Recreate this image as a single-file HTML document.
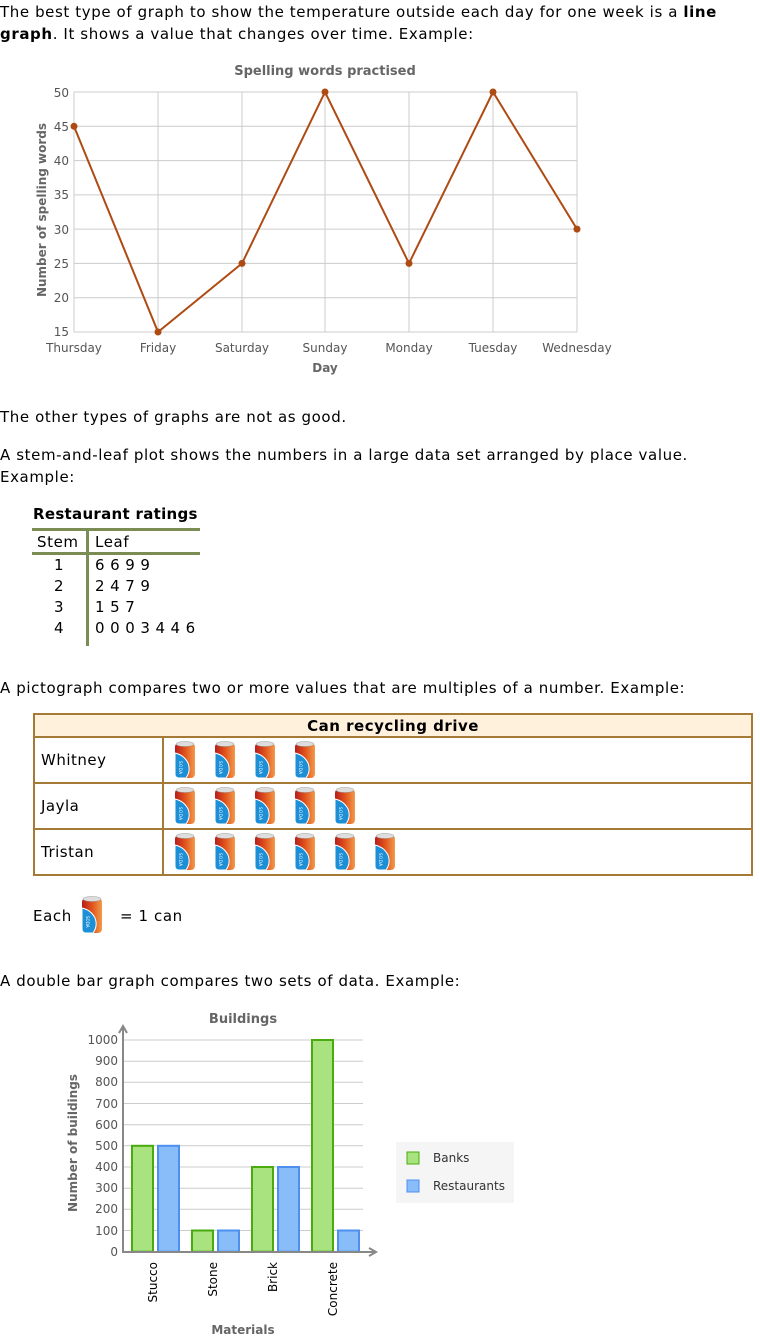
<!DOCTYPE html>
<html><head><meta charset="utf-8"><style>
body{margin:0;width:760px;height:1338px;background:#fff;font-family:"DejaVu Sans","Liberation Sans",sans-serif;color:#000;position:relative;overflow:hidden}
.t{position:absolute;font-size:15px;line-height:22px;white-space:nowrap;letter-spacing:0.6px}
svg text{font-family:"DejaVu Sans","Liberation Sans",sans-serif}
table.pic{position:absolute;left:33px;top:713px;width:720px;border-collapse:collapse}
table.pic td{border:2px solid #a57a36;font-size:15px;padding:0 0 0 6px;height:44px;letter-spacing:0.5px}
</style></head><body>
<div class="t" style="left:0;top:1px">The best type of graph to show the temperature outside each day for one week is a <b>line</b></div>
<div class="t" style="left:0;top:23px"><b>graph</b>. It shows a value that changes over time. Example:</div>

<svg style="position:absolute;left:0;top:0" width="760" height="400">
<text x="325" y="75" font-size="13" font-weight="bold" fill="#666" text-anchor="middle">Spelling words practised</text>
<g stroke="#ccc" stroke-width="1">
<line x1="74" y1="92" x2="577" y2="92"/><line x1="74" y1="126.3" x2="577" y2="126.3"/><line x1="74" y1="160.6" x2="577" y2="160.6"/><line x1="74" y1="194.9" x2="577" y2="194.9"/><line x1="74" y1="229.1" x2="577" y2="229.1"/><line x1="74" y1="263.4" x2="577" y2="263.4"/><line x1="74" y1="297.7" x2="577" y2="297.7"/><line x1="74" y1="332" x2="577" y2="332"/>
<line x1="74" y1="92" x2="74" y2="332"/><line x1="158" y1="92" x2="158" y2="332"/><line x1="242" y1="92" x2="242" y2="332"/><line x1="325" y1="92" x2="325" y2="332"/><line x1="409" y1="92" x2="409" y2="332"/><line x1="493" y1="92" x2="493" y2="332"/><line x1="577" y1="92" x2="577" y2="332"/>
</g>
<g font-size="12" fill="#555" text-anchor="end">
<text x="69" y="97">50</text><text x="69" y="131">45</text><text x="69" y="165">40</text><text x="69" y="199">35</text><text x="69" y="234">30</text><text x="69" y="268">25</text><text x="69" y="302">20</text><text x="69" y="336">15</text></g>
<g font-size="12" fill="#555" text-anchor="middle">
<text x="74" y="352">Thursday</text><text x="158" y="352">Friday</text><text x="242" y="352">Saturday</text><text x="325" y="352">Sunday</text><text x="409" y="352">Monday</text><text x="493" y="352">Tuesday</text><text x="577" y="352">Wednesday</text></g>
<text x="325" y="372" font-size="12" font-weight="bold" fill="#666" text-anchor="middle">Day</text>
<text transform="translate(46,210) rotate(-90)" font-size="12" font-weight="bold" fill="#666" text-anchor="middle">Number of spelling words</text>
<polyline fill="none" stroke="#ae4a13" stroke-width="2" points="74,126.3 158,332 242,263.4 325,92 409,263.4 493,92 577,229.1"/>
<g fill="#ae4a13"><circle cx="74" cy="126.3" r="3.5"/><circle cx="158" cy="332" r="3.5"/><circle cx="242" cy="263.4" r="3.5"/><circle cx="325" cy="92" r="3.5"/><circle cx="409" cy="263.4" r="3.5"/><circle cx="493" cy="92" r="3.5"/><circle cx="577" cy="229.1" r="3.5"/></g>
</svg>

<div class="t" style="left:0;top:406px">The other types of graphs are not as good.</div>
<div class="t" style="left:0;top:444px">A stem-and-leaf plot shows the numbers in a large data set arranged by place value.</div>
<div class="t" style="left:0;top:466px">Example:</div>

<div class="t" style="left:33px;top:503px;font-weight:bold;letter-spacing:0.3px">Restaurant ratings</div>
<div style="position:absolute;left:32px;top:528px;width:168px;height:3px;background:#7b8d54"></div>
<div style="position:absolute;left:32px;top:552px;width:168px;height:3px;background:#7b8d54"></div>
<div style="position:absolute;left:86px;top:528px;width:3px;height:118px;background:#7b8d54"></div>
<div class="t" style="left:37px;top:531px">Stem</div><div class="t" style="left:95px;top:531px">Leaf</div>
<div class="t" style="left:54px;top:555px;line-height:21px">1<br>2<br>3<br>4</div>
<div class="t" style="left:95px;top:555px;line-height:21px;letter-spacing:0.4px">6 6 9 9<br>2 4 7 9<br>1 5 7<br>0 0 0 3 4 4 6</div>

<div class="t" style="left:0;top:677px">A pictograph compares two or more values that are multiples of a number. Example:</div>

<svg width="0" height="0" style="position:absolute"><defs>
<linearGradient id="cg" x1="0" x2="1"><stop offset="0" stop-color="#b81c1c"/><stop offset=".5" stop-color="#e0521c"/><stop offset="1" stop-color="#f39a4a"/></linearGradient>
<symbol id="can" viewBox="0 0 22 38"><rect x="1" y="2" width="20" height="35" rx="4" fill="url(#cg)"/><ellipse cx="11" cy="3" rx="9" ry="2.5" fill="#ddd" stroke="#999" stroke-width=".5"/><path d="M1 12 Q10 14 14 22 Q17 30 12 37 L5 37 Q1 37 1 33 Z" fill="#1d8fd6" stroke="#fff" stroke-width="1"/><text x="5" y="20" font-size="4" fill="#fff" transform="rotate(90 5 20)">SODA</text></symbol></defs></svg>

<table class="pic">
<tr><td colspan="2" style="height:21px;background:#fff1dc;text-align:center;font-weight:bold;padding:0">Can recycling drive</td></tr>
<tr><td style="width:121px">Whitney</td><td><svg width="260" height="40" style="display:block;margin-left:4px"><use href="#can" x="0" y="1" width="22" height="38"/><use href="#can" x="40" y="1" width="22" height="38"/><use href="#can" x="80" y="1" width="22" height="38"/><use href="#can" x="120" y="1" width="22" height="38"/></svg></td></tr>
<tr><td>Jayla</td><td><svg width="260" height="40" style="display:block;margin-left:4px"><use href="#can" x="0" y="1" width="22" height="38"/><use href="#can" x="40" y="1" width="22" height="38"/><use href="#can" x="80" y="1" width="22" height="38"/><use href="#can" x="120" y="1" width="22" height="38"/><use href="#can" x="160" y="1" width="22" height="38"/></svg></td></tr>
<tr><td>Tristan</td><td><svg width="260" height="40" style="display:block;margin-left:4px"><use href="#can" x="0" y="1" width="22" height="38"/><use href="#can" x="40" y="1" width="22" height="38"/><use href="#can" x="80" y="1" width="22" height="38"/><use href="#can" x="120" y="1" width="22" height="38"/><use href="#can" x="160" y="1" width="22" height="38"/><use href="#can" x="200" y="1" width="22" height="38"/></svg></td></tr>
</table>

<div class="t" style="left:33px;top:905px">Each</div>
<svg style="position:absolute;left:81px;top:896px" width="22" height="38"><use href="#can" x="0" y="0" width="22" height="38"/></svg>
<div class="t" style="left:120px;top:905px">= 1 can</div>

<div class="t" style="left:0;top:970px">A double bar graph compares two sets of data. Example:</div>

<svg style="position:absolute;left:0;top:1000px" width="760" height="338">
<text x="243" y="23" font-size="13" font-weight="bold" fill="#666" text-anchor="middle">Buildings</text>
<g stroke="#ccc"><line x1="123" y1="40" x2="363" y2="40"/><line x1="123" y1="61.2" x2="363" y2="61.2"/><line x1="123" y1="82.3" x2="363" y2="82.3"/><line x1="123" y1="103.5" x2="363" y2="103.5"/><line x1="123" y1="124.7" x2="363" y2="124.7"/><line x1="123" y1="145.8" x2="363" y2="145.8"/><line x1="123" y1="167" x2="363" y2="167"/><line x1="123" y1="188.2" x2="363" y2="188.2"/><line x1="123" y1="209.3" x2="363" y2="209.3"/><line x1="123" y1="230.5" x2="363" y2="230.5"/></g>
<g font-size="12" fill="#555" text-anchor="end"><text x="118" y="44">1000</text><text x="118" y="65">900</text><text x="118" y="86">800</text><text x="118" y="108">700</text><text x="118" y="129">600</text><text x="118" y="150">500</text><text x="118" y="171">400</text><text x="118" y="192">300</text><text x="118" y="213">200</text><text x="118" y="235">100</text><text x="118" y="256">0</text></g>
<g stroke-width="2"><g fill="#a8e37f" stroke="#4aab0e"><rect x="132" y="145.8" width="21" height="105.9"/><rect x="192" y="230.5" width="21" height="21.2"/><rect x="252" y="167" width="21" height="84.7"/><rect x="312" y="40" width="21" height="211.7"/></g>
<g fill="#88bdfa" stroke="#4d90ef"><rect x="158" y="145.8" width="21" height="105.9"/><rect x="218" y="230.5" width="21" height="21.2"/><rect x="278" y="167" width="21" height="84.7"/><rect x="338" y="230.5" width="21" height="21.2"/></g></g>
<g stroke="#888" stroke-width="2" fill="none"><line x1="123" y1="252" x2="123" y2="26"/><line x1="122" y1="252" x2="376" y2="252"/><polyline points="119,33 123,26 127,33"/><polyline points="369,248 376,252 369,256"/></g>
<g font-size="12" fill="#000" text-anchor="end">
<text transform="translate(157,262) rotate(-90)">Stucco</text><text transform="translate(217,262) rotate(-90)">Stone</text><text transform="translate(277,262) rotate(-90)">Brick</text><text transform="translate(337,262) rotate(-90)">Concrete</text></g>
<text x="243" y="334" font-size="12" font-weight="bold" fill="#666" text-anchor="middle">Materials</text>
<text transform="translate(77,143) rotate(-90)" font-size="12" font-weight="bold" fill="#666" text-anchor="middle">Number of buildings</text>
<rect x="396" y="142" width="118" height="61" fill="#f5f5f5"/>
<rect x="407" y="152" width="12" height="12" fill="#a8e37f" stroke="#4aab0e"/><text x="433" y="162" font-size="12" fill="#333">Banks</text>
<rect x="407" y="180" width="12" height="12" fill="#88bdfa" stroke="#4d90ef"/><text x="433" y="190" font-size="12" fill="#333">Restaurants</text>
</svg>
</body></html>
